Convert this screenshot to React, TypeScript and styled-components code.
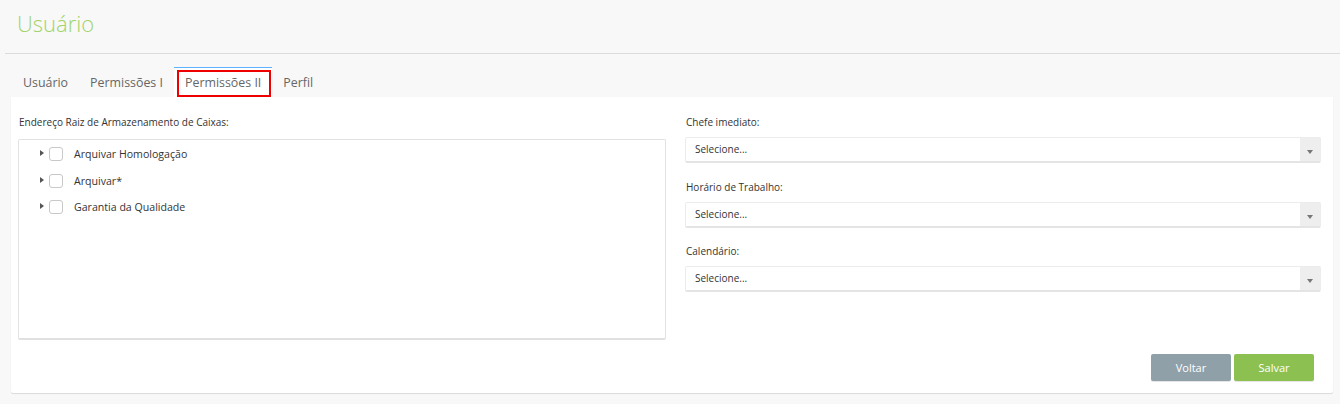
import React from 'react';
import styled, { createGlobalStyle } from 'styled-components';

const GlobalStyle = createGlobalStyle`
  html, body {
    margin: 0;
    padding: 0;
    background: #f8f8f8;
    font-family: "Open Sans", "Liberation Sans", sans-serif;
    color: #333;
  }
  * { box-sizing: border-box; }
`

const Page = styled.div`
  width: 1340px;
  height: 404px;
  overflow: hidden;
  padding-left: 5px;
`

const Header = styled.div`
  height: 54px;
  border-bottom: 1px solid #dcdcdc;
  padding: 8px 0 0 12px;
`

const Title = styled.h1`
  margin: 0;
  font-weight: 300;
  font-size: 22px;
  line-height: 30px;
  color: #a0d468;
`

const Body = styled.div`
  padding: 13px 7px 0 6px;
`

const TabBar = styled.div`
  display: flex;
  padding-left: 1px;
`

const Tab = styled.div<{ $active?: boolean }>`
  position: relative;
  height: 30px;
  padding: 0 11px;
  font-size: 12.4px;
  line-height: 29px;
  color: #666;
  border-top: 1px solid ${p => (p.$active ? '#5db2ff' : 'transparent')};
  background: ${p => (p.$active ? '#fff' : 'transparent')};
`

const Highlight = styled.span`
  position: absolute;
  left: 3px;
  right: 1px;
  top: 2px;
  bottom: 0;
  border: 2px solid #e00;
  pointer-events: none;
`

const Panel = styled.div`
  background: #fff;
  height: 296px;
  box-shadow: 0 1px 1px rgba(0, 0, 0, 0.12);
  border-radius: 0 0 2px 2px;
  padding: 18px 12px 0 7px;
  display: flex;
  flex-direction: column;
`

const Columns = styled.div`
  display: grid;
  grid-template-columns: 648px 636px;
  column-gap: 19px;
`

const Field = styled.div<{ $gap?: number }>`
  display: flex;
  flex-direction: column;
  margin-bottom: ${p => p.$gap ?? 0}px;
`

const Label = styled.label<{ $space?: number }>`
  font-size: 10px;
  line-height: 14px;
  color: #333;
  padding-left: 1px;
  margin-bottom: ${p => p.$space ?? 8}px;
`

const TreeBox = styled.div`
  height: 201px;
  border: 1px solid #e2e2e2;
  border-bottom: 2px solid #e0e0e0;
  border-radius: 2px;
  padding: 1px 0 0 20px;
`

const TreeRow = styled.div`
  display: flex;
  align-items: center;
  height: 26.5px;
`

const Caret = styled.span`
  width: 0;
  height: 0;
  border-top: 3.5px solid transparent;
  border-bottom: 3.5px solid transparent;
  border-left: 4px solid #555;
  margin: 0 5px 2px 1px;
`

const Checkbox = styled.span`
  width: 14px;
  height: 14px;
  border: 1px solid #c8c8c8;
  border-radius: 3px;
  background: #fff;
  margin-right: 11px;
`

const TreeText = styled.span`
  font-size: 10.6px;
  color: #333;
`

const Select = styled.div`
  display: flex;
  height: 26px;
  border: 1px solid #ececec;
  border-bottom: 2px solid #e4e4e4;
  border-radius: 2px;
  background: #fff;
`

const SelectValue = styled.div`
  flex: 1;
  font-size: 10px;
  line-height: 23px;
  padding-left: 9px;
  color: #333;
`

const SelectArrow = styled.div`
  width: 20px;
  background: #eeeeee;
  display: flex;
  align-items: center;
  justify-content: center;
  &::after {
    content: '';
    border-left: 3px solid transparent;
    border-right: 3px solid transparent;
    border-top: 4px solid #777;
    margin-top: 4px;
  }
`

const Actions = styled.div`
  display: flex;
  justify-content: flex-end;
  gap: 3px;
  margin-top: 14px;
  padding-right: 7px;
`

const Button = styled.button<{ $variant: 'back' | 'save' }>`
  width: 80px;
  height: 27px;
  border: none;
  border-radius: 2px;
  font-family: inherit;
  font-size: 11px;
  color: #fff;
  background: ${p => (p.$variant === 'save' ? '#8cc152' : '#8fa0a8')};
  box-shadow: 0 1px 0 rgba(0, 0, 0, 0.1);
`

const folders = ['Arquivar Homologação', 'Arquivar*', 'Garantia da Qualidade']
const selects = [
  { label: 'Chefe imediato:', gap: 17 },
  { label: 'Horário de Trabalho:', gap: 16 },
  { label: 'Calendário:', gap: 0 },
]

export default function App() {
  return (
    <Page>
      <GlobalStyle />
      <Header>
        <Title>Usuário</Title>
      </Header>
      <Body>
        <TabBar>
          <Tab>Usuário</Tab>
          <Tab>Permissões I</Tab>
          <Tab $active>
            Permissões II
            <Highlight />
          </Tab>
          <Tab>Perfil</Tab>
        </TabBar>
        <Panel>
          <Columns>
            <Field>
              <Label $space={10}>Endereço Raiz de Armazenamento de Caixas:</Label>
              <TreeBox>
                {folders.map(f => (
                  <TreeRow key={f}>
                    <Caret />
                    <Checkbox />
                    <TreeText>{f}</TreeText>
                  </TreeRow>
                ))}
              </TreeBox>
            </Field>
            <div>
              {selects.map(s => (
                <Field key={s.label} $gap={s.gap}>
                  <Label>{s.label}</Label>
                  <Select>
                    <SelectValue>Selecione...</SelectValue>
                    <SelectArrow />
                  </Select>
                </Field>
              ))}
            </div>
          </Columns>
          <Actions>
            <Button $variant="back">Voltar</Button>
            <Button $variant="save">Salvar</Button>
          </Actions>
        </Panel>
      </Body>
    </Page>
  )
}
